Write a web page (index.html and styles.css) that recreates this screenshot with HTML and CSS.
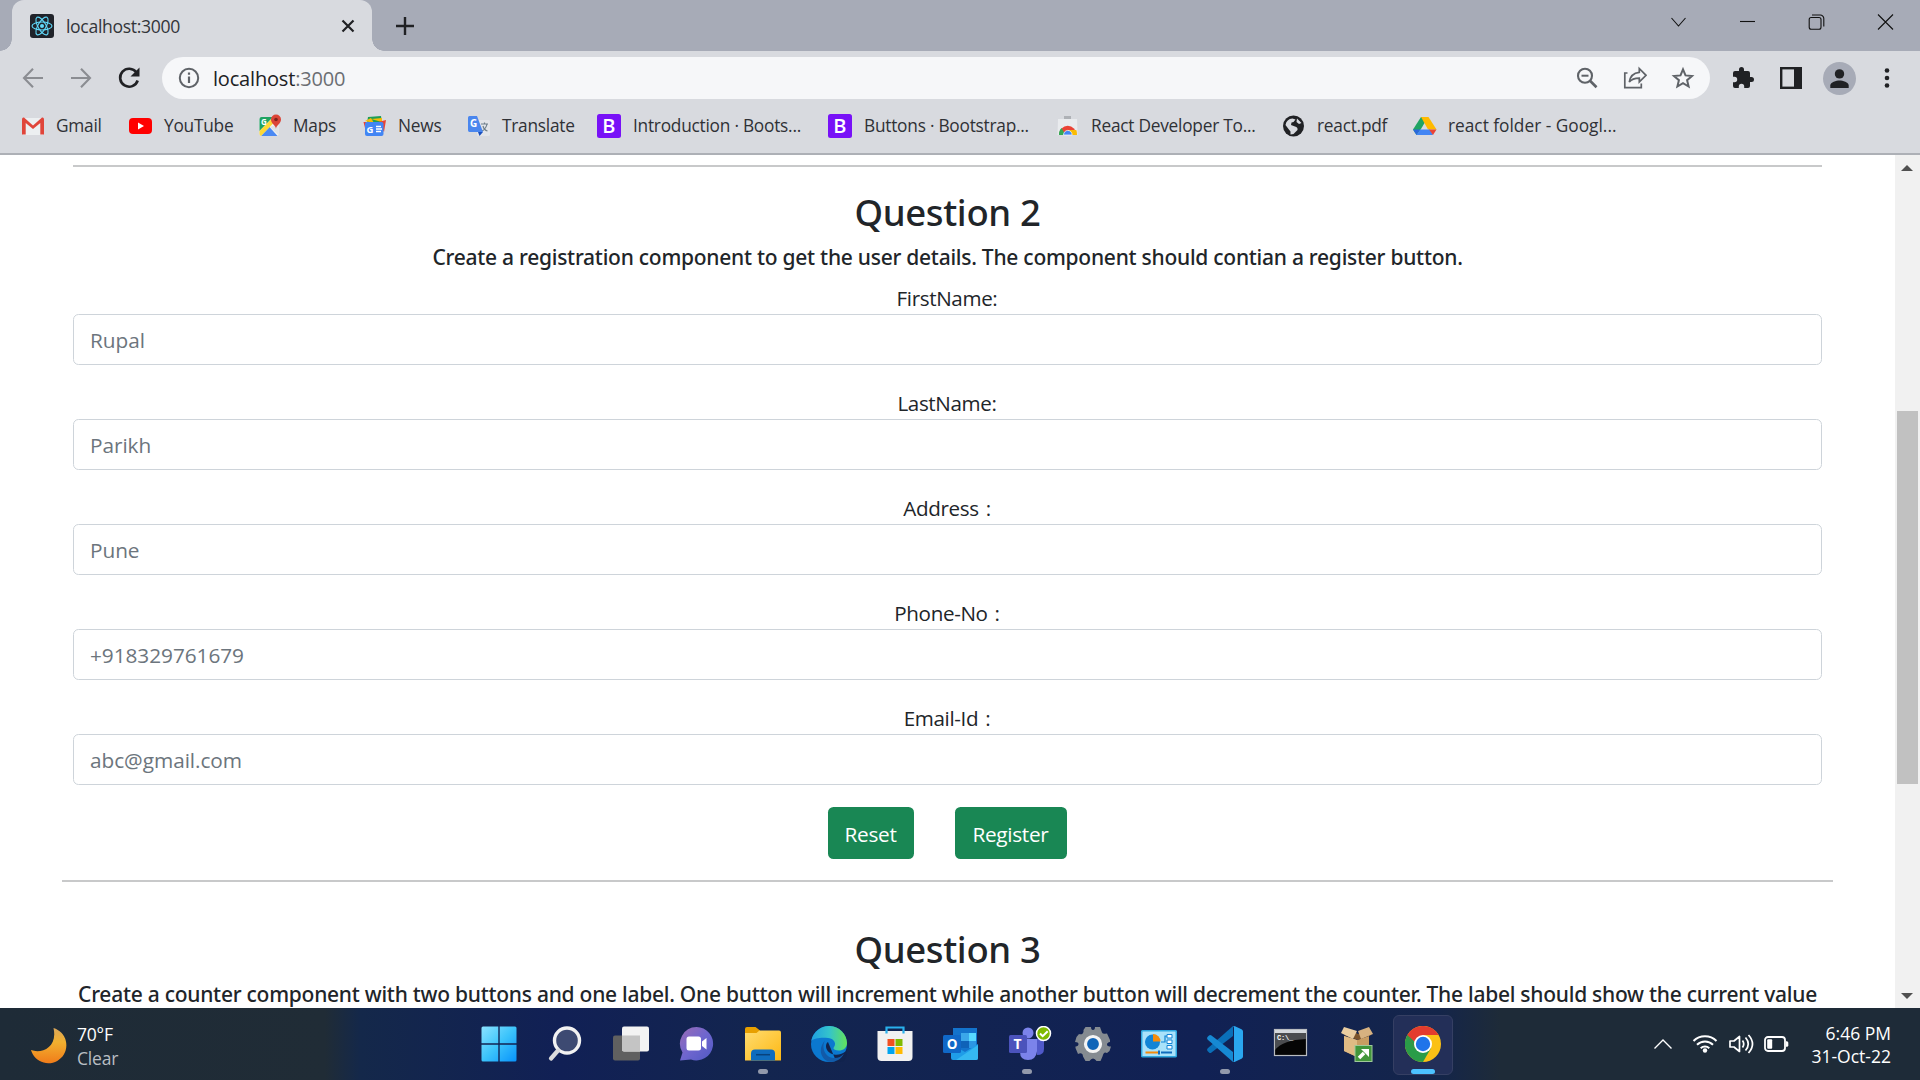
FILE: index.html
```html
<!DOCTYPE html>
<html lang="en">
<head>
<meta charset="utf-8">
<title>localhost:3000</title>
<link rel="stylesheet" href="styles.css">
</head>
<body>
<div class="screen">
  <header class="browser">
    <div class="tabstrip">
      <div class="tab">
        <svg class="favicon" width="24" height="24" viewBox="0 0 24 24"><rect width="24" height="24" rx="3" fill="#20232a"/><g fill="none" stroke="#61dafb" stroke-width="1.1"><ellipse cx="12" cy="12" rx="10" ry="4"/><ellipse cx="12" cy="12" rx="10" ry="4" transform="rotate(60 12 12)"/><ellipse cx="12" cy="12" rx="10" ry="4" transform="rotate(120 12 12)"/></g><circle cx="12" cy="12" r="2" fill="#61dafb"/></svg>
        <span class="tab-title">localhost:3000</span>
        <svg class="tab-close" width="14" height="14" viewBox="0 0 14 14"><path d="M1.5 1.5l11 11m0-11l-11 11" stroke="#202124" stroke-width="2.2"/></svg>
      </div>
      <svg class="new-tab" width="18" height="18" viewBox="0 0 18 18"><path d="M9 0v18M0 9h18" stroke="#202124" stroke-width="2.4"/></svg>
      <div class="window-controls">
        <svg width="16" height="16" viewBox="0 0 16 16"><path d="M1 4l7 8 7-8"/></svg>
        <svg width="16" height="16" viewBox="0 0 16 16"><path d="M.5 7.5h15"/></svg>
        <svg width="16" height="16" viewBox="0 0 16 16"><rect x=".7" y="3.5" width="11.8" height="11.8" rx="2"/><path d="M3.5 1h8.300a3.500 3.500 0 0 1 3.500 3.500v8"/></svg>
        <svg width="16" height="16" viewBox="0 0 16 16"><path d="M.5.5l15 15m0-15l-15 15"/></svg>
      </div>
    </div>
    <div class="toolbar">
      <svg width="24" height="24" viewBox="0 0 24 24" fill="none" stroke="#8b8d92" stroke-width="2.1"><path d="M22 12H3.500M12 2.800L3 12l9 9.200"/></svg>
      <svg width="24" height="24" viewBox="0 0 24 24" fill="none" stroke="#8b8d92" stroke-width="2.1"><path d="M2 12h18.500M12 2.800L21 12l-9 9.200"/></svg>
      <svg width="24" height="24" viewBox="0 0 24 24"><path d="M19.500 6.500A9 9 0 1 0 20.700 14.500" fill="none" stroke="#202124" stroke-width="2.600"/><path d="M22.500 1.500v9h-9z" fill="#202124"/></svg>
      <div class="omnibox">
        <svg width="24" height="24" viewBox="0 0 24 24"><circle cx="12" cy="12" r="9.200" fill="none" stroke="#5f6368" stroke-width="2"/><path d="M12 10.500V17M12 6.500v2.200" stroke="#5f6368" stroke-width="2.200"/></svg>
        <span class="url">localhost<i>:3000</i></span>
        <svg width="24" height="24" viewBox="0 0 24 24" fill="none" stroke="#5f6368"><circle cx="10" cy="9.700" r="7" stroke-width="2.100"/><path d="M6.500 9.700h7" stroke-width="2"/><path d="M15 14.800l6.500 6.400" stroke-width="2.600"/></svg>
        <svg width="24" height="24" viewBox="0 0 24 24" fill="none" stroke="#5f6368" stroke-width="1.700"><path d="M4.500 7H1.800v14.700h16.500V17.500"/><path d="M16.300 2.500l6.700 6.800-6.700 6.600v-3.800c-5 0-7.800 1-10 4 .7-5 3.700-9.200 10-9.800z"/></svg>
        <svg width="24" height="24" viewBox="0 0 24 24" fill="none" stroke="#5f6368" stroke-width="2"><path d="M12 3.400l2.500 6 6.500.55-4.900 4.250 1.500 6.300L12 17.100l-5.600 3.400 1.500-6.300L3 9.950l6.500-.55z"/></svg>
      </div>
      <svg class="ext" width="24" height="24" viewBox="0 0 24 24"><path d="M20.500 11H19V7a2 2 0 0 0-2-2h-4V3.500a2.500 2.500 0 0 0-5 0V5H4a2 2 0 0 0-1.990 2v3.800H3.500a2.700 2.700 0 0 1 0 5.400H2V20a2 2 0 0 0 2 2h3.800v-1.500a2.700 2.700 0 0 1 5.400 0V22H17a2 2 0 0 0 2-2v-4h1.500a2.500 2.500 0 0 0 0-5z" fill="#202124"/></svg>
      <svg class="panel" width="24" height="24" viewBox="0 0 24 24"><rect x="2.200" y="2.200" width="19.600" height="19.600" fill="none" stroke="#202124" stroke-width="2.400"/><path d="M15 2h7v20h-7z" fill="#202124"/></svg>
      <svg class="avatar" width="33" height="33" viewBox="0 0 33 33"><circle cx="16.500" cy="16.500" r="16.500" fill="#a7abb7"/><circle cx="16.500" cy="11.900" r="4.700" fill="#202124"/><path d="M7.300 26v-2.500c0-3.300 6-5 9.200-5s9.200 1.700 9.200 5V26z" fill="#202124"/></svg>
      <svg class="menu" width="24" height="24" viewBox="0 0 24 24" fill="#202124"><circle cx="12" cy="4.500" r="2.300"/><circle cx="12" cy="12" r="2.300"/><circle cx="12" cy="19.500" r="2.300"/></svg>
    </div>
    <nav class="bookmarks">
      <a class="bookmark"><svg viewBox="0 0 24 24"><path d="M2 4h20v17H2z" fill="#eceff1"/><path d="M1 20.500V5.500Q1 3 3 3.500l9 8 9-8q2-.5 2 2v15h-3.700V9L12 15 4.700 9v11.500z" fill="#e0453a"/></svg>Gmail</a>
      <a class="bookmark"><svg viewBox="0 0 24 24"><rect y="4" width="23" height="16" rx="4" fill="#f00"/><path d="M9 8.500l6 3.500-6 3.500z" fill="#fff"/></svg>YouTube</a>
      <a class="bookmark"><svg viewBox="0 0 24 24"><rect x="1.500" y="3" width="19" height="19" rx="2" fill="#f1f3f4"/><path d="M1.500 17V5a2 2 0 0 1 2-2H15z" fill="#1ea362"/><path d="M3 22l8.500-9 8 9z" fill="#4a89f3"/><path d="M1.500 17L15 3.500l2 4L3 22q-1.500-.5-1.500-2z" fill="#fdd835"/><path d="M12 13l8.500 8V10z" fill="#dfe2e5"/><text x="3" y="10.500" class="glyph" font-size="8" fill="#fff">G</text><path d="M18 15c0-4-5-5-5-9.500a5 5 0 0 1 10 0C23 10 18 11 18 15z" fill="#db4437"/><circle cx="18" cy="5.500" r="1.800" fill="#7d231c"/></svg>Maps</a>
      <a class="bookmark"><svg viewBox="0 0 24 24"><path d="M5 3l13-1 1 7H4z" fill="#1e9e55"/><path d="M2 7l6-3 3 5z" fill="#fbbc04"/><path d="M8 5l11-1v4z" fill="#fbbc04"/><path d="M15 8l8-2-2 12z" fill="#ea4335"/><path d="M.5 8l3 0v12z" fill="#ea4335"/><rect x="2" y="8" width="18.500" height="14" rx="2" fill="#4285f4"/><text x="3.500" y="18.500" class="glyph" font-size="9.500" fill="#fff">G</text><path d="M13 12.500h5m-5 2.500h6m-6 2.500h5" stroke="#fff" stroke-width="1.300"/></svg>News</a>
      <a class="bookmark"><svg viewBox="0 0 24 24"><rect x="10" y="6" width="13" height="16" rx="1.500" fill="#e3e5e9"/><path d="M14 10h7m-3.500-1.500V10m2.500 0q-1 5-5 7m1-5q1 4 4.500 5" fill="none" stroke="#70808c" stroke-width="1.200"/><path d="M2.500 2H10l6 16H2.500A1.700 1.700 0 0 1 1 16.300V3.700A1.700 1.700 0 0 1 2.500 2z" fill="#4a86ee"/><path d="M11 18h5l-3.500 4z" fill="#1a4fbd"/><text x="3" y="13" class="glyph" font-size="10" fill="#fff">G</text></svg>Translate</a>
      <a class="bookmark"><svg viewBox="0 0 24 24"><rect width="24" height="24" rx="2.500" fill="#7811f7"/><text x="5.300" y="19.300" font-size="20" font-weight="600" fill="#fff">B</text></svg>Introduction · Boots...</a>
      <a class="bookmark"><svg viewBox="0 0 24 24"><rect width="24" height="24" rx="2.500" fill="#7811f7"/><text x="5.300" y="19.300" font-size="20" font-weight="600" fill="#fff">B</text></svg>Buttons · Bootstrap...</a>
      <a class="bookmark"><svg viewBox="0 0 24 24"><path d="M8 2h7v3H8z" fill="#aeb1b6"/><path d="M2 5h19l.5 16H1.500z" fill="#e9ebee"/><path d="M3 21a8.600 9 0 0 1 17.500 0z" fill="#ea4335"/><path d="M3 21a9 9 0 0 1 2.500-7l4 7z" fill="#34a853"/><path d="M12 16h8.300q.8 2 .7 5h-9z" fill="#fbbc04"/><path d="M7.500 21a4.300 4.600 0 0 1 8.600 0z" fill="#4285f4" stroke="#fff" stroke-width=".7"/></svg>React Developer To...</a>
      <a class="bookmark"><svg viewBox="0 0 24 24"><circle cx="11.500" cy="12" r="10.500" fill="#202124"/><path d="M3.500 11q1-6 7-6.500l3 1-2 2.500-2 .5-.5 2.500 4 1.500q3 .5 2.500 3.500l-4 4-3 .5v-3l-2-2.500zM15 4.500l4.500 4.500-2.500 1-2.500-2z" fill="#d8dadf"/></svg>react.pdf</a>
      <a class="bookmark"><svg viewBox="0 0 24 24"><path d="M8 3h7L8 15l-4.500 6L0 15.500z" fill="#1fa463"/><path d="M8 3h7.500l8 12.500H15z" fill="#ffba00"/><path d="M7 15.500h10l3 5.500H3.500z" fill="#4285f4"/><path d="M3.500 21L0 15.500h7z" fill="#2a67dc"/><path d="M16 15.500h7.500L20 21z" fill="#ea4335"/></svg><span class="long">react folder - Googl...</span></a>
    </nav>
  </header>

  <div class="viewport">
    <main class="page">
      <hr class="rule">
      <section>
        <h2>Question 2</h2>
        <h5>Create a registration component to get the user details. The component should contian a register button.</h5>
        <form class="form">
          <div class="field"><label for="fn">FirstName:</label><input id="fn" placeholder="Rupal"></div>
          <div class="field"><label for="ln">LastName:</label><input id="ln" placeholder="Parikh"></div>
          <div class="field"><label for="ad">Address :</label><input id="ad" placeholder="Pune"></div>
          <div class="field"><label for="ph">Phone-No :</label><input id="ph" placeholder="+918329761679"></div>
          <div class="field"><label for="em">Email-Id :</label><input id="em" placeholder="abc@gmail.com"></div>
        </form>
        <div class="actions">
          <button class="btn reset" type="button">Reset</button>
          <button class="btn register" type="button">Register</button>
        </div>
      </section>
      <hr class="rule wide">
      <section class="next">
        <h2>Question 3</h2>
        <h5>Create a counter component with two buttons and one label. One button will increment while another button will decrement the counter. The label should show the current value</h5>
      </section>
    </main>
    <div class="scrollbar">
      <svg width="12" height="6" viewBox="0 0 12 6"><path d="M0 6l6-6 6 6z" fill="#505050"/></svg>
      <div class="thumb"></div>
      <svg width="12" height="6" viewBox="0 0 12 6"><path d="M0 0l6 6 6-6z" fill="#505050"/></svg>
    </div>
  </div>

  <footer class="taskbar">
    <div class="weather">
      <svg width="36" height="36" viewBox="0 0 36 36"><defs><linearGradient id="moon" x1="0" y1="0" x2="0" y2="1"><stop offset="0" stop-color="#d9a65a"/><stop offset=".4" stop-color="#f2b02f"/><stop offset="1" stop-color="#f07c1a"/></linearGradient></defs><path d="M22.500 0A18 18 0 1 1 0 22c10 4 27-2 22.500-22z" fill="url(#moon)"/></svg>
      <div class="weather-text"><div>70°F</div><div class="dim">Clear</div></div>
    </div>
    <div class="apps">
      <div class="app"><svg viewBox="0 0 36 36"><defs><linearGradient id="win" x1="0" y1="0" x2="1" y2="1"><stop offset="0" stop-color="#8be3ff"/><stop offset=".5" stop-color="#3cc4fb"/><stop offset="1" stop-color="#0893fb"/></linearGradient></defs><path d="M2 .5h15.300v16.800H.5V2A1.500 1.500 0 0 1 2 .5zM18.700.5H34A1.500 1.500 0 0 1 35.500 2v15.300H18.700zM.5 18.700h16.800v16.800H2A1.500 1.500 0 0 1 .5 34zM18.700 18.700h16.800V34a1.500 1.500 0 0 1-1.500 1.500H18.700z" fill="url(#win)"/></svg></div>
      <div class="app"><svg viewBox="0 0 36 36"><circle cx="20" cy="14.500" r="12.500" fill="#3d4a72" stroke="#f2f2f2" stroke-width="3.400"/><path d="M11 24.500L4 32.500" stroke="#dcdcdc" stroke-width="4.200" stroke-linecap="round"/></svg></div>
      <div class="app"><svg viewBox="0 0 36 36"><rect x="0" y="9.500" width="27" height="25" rx="2" fill="#606060"/><rect x="9" y=".5" width="27" height="25" rx="2" fill="#f3f3f3"/><path d="M9 9.500h18v16H11a2 2 0 0 1-2-2z" fill="#c4c4c4"/></svg></div>
      <div class="app"><svg viewBox="0 0 36 36"><defs><linearGradient id="chat" x1="0" y1="0" x2="1" y2="1"><stop offset="0" stop-color="#9a6bb5"/><stop offset=".5" stop-color="#6f66ce"/><stop offset="1" stop-color="#4f59c5"/></linearGradient></defs><path d="M17.500 1a16.700 16.700 0 1 1-5.500 32.500L1 34.500 3.500 26.500A16.700 16.700 0 0 1 17.500 1z" fill="url(#chat)"/><rect x="7.500" y="10.500" width="14.500" height="14" rx="2.500" fill="#fff"/><path d="M23 15.500l4.500-3.500v11.500l-4.500-3.500z" fill="#fff"/></svg></div>
      <div class="app running"><svg viewBox="0 0 36 36"><defs><linearGradient id="fold" x1="0" y1="0" x2="1" y2="1"><stop offset="0" stop-color="#ffdc70"/><stop offset="1" stop-color="#fdb813"/></linearGradient></defs><path d="M0 3a2 2 0 0 1 2-2h8.500l4.500 3.500V12H0z" fill="#e8a000"/><path d="M0 7h11.500l3-2.500H34a2 2 0 0 1 2 2v28H0z" fill="url(#fold)"/><path d="M6 34.500v-7a4 4 0 0 1 4-4h16a4 4 0 0 1 4 4v7z" fill="#0f6cbd"/><path d="M11 28.700h14" stroke="#08427c" stroke-width="1.500"/></svg></div>
      <div class="app"><svg viewBox="0 0 36 36"><defs><linearGradient id="edge" x1="0" x2="1"><stop offset="0" stop-color="#1f9fe0"/><stop offset=".5" stop-color="#34c3cc"/><stop offset="1" stop-color="#63e35a"/></linearGradient></defs><circle cx="18" cy="18" r="18" fill="#0b78d0"/><path d="M.3 15A18 18 0 0 1 36 17c0 5-4 7.500-8 7.500-5 0-6.500-1.500-5-3.500 2.500-3 .5-8.500-6-9C10 11.500 3 12 .3 15z" fill="url(#edge)"/><path d="M17 16c-4 3-2 11 6 12.500 4 .8 8-.5 10-2 .8-.5 2.500-1 3-2.500l1 2-4 9-7 2-1-2z" fill="#11234d"/><path d="M14 14.500c-4 7 0 16.500 8 17.500 5 .3 8-1 11-4.500-4 8-11 9-16 8-9-4-9-15-3-21z" fill="#125aa8"/></svg></div>
      <div class="app"><svg viewBox="0 0 36 36"><path d="M.5 5h35v26a4 4 0 0 1-4 4h-27a4 4 0 0 1-4-4z" fill="#f1f1f1"/><path d="M9.500 7.500v-6h17v6" fill="none" stroke="#29b0ec" stroke-width="2.200"/><path d="M10.500 13h7v7h-7z" fill="#f25022"/><path d="M18.500 13h7v7h-7z" fill="#7fba00"/><path d="M10.500 21h7v7h-7z" fill="#00a4ef"/><path d="M18.500 21h7v7h-7z" fill="#ffb900"/></svg></div>
      <div class="app"><svg viewBox="0 0 36 36"><path d="M10 2h24v24H10z" fill="#1373cc"/><path d="M18 7h8v8h-8z" fill="#3ba7ea"/><path d="M26 7h7v8h-7z" fill="#57d9ff"/><path d="M18 15h8v7h-8z" fill="#0f62b8"/><path d="M26 15h7v7h-7z" fill="#2b96e4"/><path d="M8 18l14 8 13-8v14a2 2 0 0 1-2 2H10a2 2 0 0 1-2-2z" fill="#1f9de8"/><path d="M13 34l22-15v13a2 2 0 0 1-2 2z" fill="#35b8f1"/><rect x="0" y="9" width="18" height="18" rx="1.500" fill="#1068c8"/><text x="3.700" y="22.500" class="glyph" font-size="13.500" fill="#fff">O</text></svg></div>
      <div class="app running"><svg class="teams" viewBox="0 0 44 36"><circle cx="19" cy="7" r="5.500" fill="#7b83eb"/><path d="M25 13h10v10q0 6-7 6z" fill="#5059c9"/><path d="M13 13h15v12q-1 9-9 9t-8-8z" fill="#7b83eb"/><rect x="0" y="9" width="18" height="18" rx="1.500" fill="#4b53bc"/><text x="4.600" y="22.700" class="glyph" font-size="14" fill="#fff">T</text><circle cx="34.500" cy="7.500" r="7" fill="#7fba00" stroke="#fff" stroke-width="1.500"/><path d="M31 7.500l2.700 2.700 5-5" fill="none" stroke="#fff" stroke-width="2"/></svg></div>
      <div class="app"><svg viewBox="0 0 36 36"><path d="M14.500 1h1.500q0 3 2 3t2-3h5l2 5.500q.5 1.500 3 1.300l2-.3L35 14v2q-3 .5-3 2.500t4 2l-1.500 4.500-2.500 2q-2-1-3 0t-1.500 3.500L25.500 35h-4q-1.500-2.500-3.500-2.500T14.500 35h-4L8 30.500q0-2.500-1.500-3t-3.500.5L.5 22v-1.500q3-.5 3-2.500T0 16l1.500-5L4 8q2 .7 3.500-.3t1-3.700L10.500 1z" fill="#858b91"/><circle cx="18" cy="18" r="7.500" fill="#0f64b8" stroke="#f4f4f4" stroke-width="3.200"/></svg></div>
      <div class="app"><svg viewBox="0 0 36 36"><rect x=".7" y="4.700" width="34.600" height="26" rx="1" fill="#a9e2fa" stroke="#2da8e0" stroke-width="1.500"/><circle cx="11.500" cy="16" r="7.500" fill="#1285d6"/><path d="M12 15.500V8a7.500 7.500 0 0 1 7.500 7.500z" fill="#f58b0a"/><path d="M20 16h4V10h2" fill="none" stroke="#1285d6" stroke-width="1.200"/><path d="M26 8.500h5v3.500h-5zm0 5.500h5v3.500h-5zm0 5.500h5V23h-5z" fill="#fff" stroke="#1285d6" stroke-width="1"/><path d="M4.500 26.500h13" stroke="#f58b0a" stroke-width="2"/><path d="M18 24.500v4M20 26.500h11" stroke="#0f6cbd" stroke-width="2"/></svg></div>
      <div class="app running"><svg viewBox="0 0 36 36"><path d="M26 0v10L4.500 26.500Q3 27.500 2 26.500L.5 25Q-.5 23.500.8 22.300z" fill="#0a6fb8"/><path d="M26 36V26L4.500 9.500Q3 8.500 2 9.500L.5 11Q-.5 12.500.8 13.700z" fill="#1689d3"/><path d="M25 0q1.500-.4 3 .3l6.500 3q1.500.7 1.500 2.200v25q0 1.500-1.500 2.200l-6.500 3q-1.500.7-3 .3 2 .3 2-2V2q0-2.300-2-2z" fill="#2aa7f0"/></svg></div>
      <div class="app"><svg viewBox="0 0 36 36"><rect x="1.500" y="3.500" width="32" height="26" fill="#050505" stroke="#b9bcc0" stroke-width="1.200"/><path d="M2 4h31v3H2z" fill="#d4d8dc"/><path d="M2 7h31v6Q10 14 2 24z" fill="#4b4d50"/><text x="4" y="14" class="mono" font-size="7" fill="#fff">C:\_</text></svg></div>
      <div class="app"><svg viewBox="0 0 36 36"><path d="M5 10l13 4 12-4v16l-12 5-13-6z" fill="#c99d62"/><path d="M18 14v17L5 25V10z" fill="#e0bb84"/><path d="M5 9L14 5l5 3 7-3 6 4-13 5z" fill="#7b542b"/><path d="M5 1L2 7l12 6 4-8z" fill="#e9cda0"/><path d="M19 5l3 8 12-5-4-7z" fill="#d7b280"/><rect x="16" y="19.500" width="17" height="16" fill="#42963b" stroke="#9fc99a"/><path d="M20 32l5-5" stroke="#fff" stroke-width="3.500"/><path d="M22 23h8v8z" fill="#fff"/></svg></div>
      <div class="app running active"><svg viewBox="0 0 36 36"><circle cx="18" cy="18" r="18" fill="#fbc116"/><path d="M18 18L2.400 9A18 18 0 0 1 33.600 9z" fill="#e33b2e"/><path d="M2.400 9A18 18 0 0 0 18 36l7.800-13.500L18 18z" fill="#2a9c48"/><path d="M18 9h15.600L25 20z" fill="#fbc116"/><path d="M2.400 9L10 22l8-13z" fill="#e33b2e"/><path d="M2.400 9l7.800 13.500L12 18z" fill="#2a9c48"/><circle cx="18" cy="18" r="9" fill="#fff"/><circle cx="18" cy="18" r="7.200" fill="#1f74ea"/></svg></div>
    </div>
    <div class="tray">
      <svg width="20" height="12" viewBox="0 0 20 12" fill="none" stroke="#fff" stroke-width="1.400"><path d="M1.500 10.500L10 2l8.500 8.500"/></svg>
      <svg class="wifi" width="26" height="24" viewBox="0 0 26 24" fill="none" stroke="#fff" stroke-width="2"><path d="M1.500 9a16.300 16.300 0 0 1 23 0M5 12.700a11.500 11.500 0 0 1 16 0M8.700 16.200a6.200 6.200 0 0 1 8.600 0"/><circle cx="13" cy="18.500" r="2.200" fill="#fff" stroke="none"/></svg>
      <svg class="volume" width="26" height="24" viewBox="0 0 26 24" fill="none" stroke="#fff" stroke-width="1.700"><path d="M2 9h4l5.500-4.500v15L6 15H2z" stroke-linejoin="round"/><path d="M14.500 8.500q2.500 3.500 0 7M17.500 5.500q5.500 6.500 0 13M20.500 3q8 9 0 18"/></svg>
      <svg class="battery" width="25" height="16" viewBox="0 0 25 16"><rect x="1" y="1" width="20" height="14" rx="3" fill="none" stroke="#fff" stroke-width="1.800"/><rect x="3.200" y="3.200" width="5" height="9.600" rx="1" fill="#fff"/><path d="M22 5.200h.8q1.500 0 1.500 1.500v2.600q0 1.500-1.500 1.500H22z" fill="#fff"/></svg>
      <div class="clock"><div>6:46 PM</div><div>31-Oct-22</div></div>
    </div>
  </footer>
</div>
</body>
</html>
```
FILE: styles.css
```css
* { box-sizing: border-box; }
body { margin: 0; font-family: "Open Sans", "Noto Sans", sans-serif; color: #212529; }
svg { display: block; flex: none; }
.glyph { font-family: "Open Sans", sans-serif; font-weight: 700; }
.mono { font-family: "Liberation Mono", monospace; font-weight: 700; }

.screen { width: 1920px; height: 1080px; display: flex; flex-direction: column; overflow: hidden; }

/* Browser frame */
.browser { flex: none; height: 155px; background: #d8dadf; border-bottom: 2px solid #adb0b6; }
.tabstrip { height: 51px; background: #a7abb7; display: flex; align-items: center; padding-left: 12px; }
.tab { position: relative; width: 360px; height: 51px; display: flex; align-items: center; padding: 0 18px; background: #d8dadf; border-radius: 12px 12px 0 0; }
.tab::before, .tab::after { content: ""; position: absolute; bottom: 0; width: 12px; height: 12px; }
.tab::before { right: 100%; background: radial-gradient(circle at 0 0, transparent 11.5px, #d8dadf 12px); }
.tab::after { left: 100%; background: radial-gradient(circle at 100% 0, transparent 11.5px, #d8dadf 12px); }
.tab-title { flex: 1; margin-left: 12px; font-size: 17.6px; letter-spacing: -0.33px; color: #33353a; }
.tab-close { margin-right: -1px; }
.new-tab { margin-left: 24px; }
.window-controls { display: flex; margin-left: auto; align-self: flex-start; height: 43px; align-items: center; }
.window-controls svg { width: 69px; fill: none; stroke: #111; stroke-width: 1.1; }

.toolbar { height: 54px; display: flex; align-items: center; gap: 24px; padding: 0 21px; }
.omnibox { flex: 1; height: 42px; margin: 0 -3px; display: flex; align-items: center; gap: 24px; padding: 0 15px; border-radius: 21px; background: #f6f7f9; }
.url { flex: 1; margin-left: -12px; font-size: 20px; letter-spacing: -0.18px; color: #202124; }
.url i { font-style: normal; color: #6b6e73; }
.avatar { margin: 0 -5px 0 -4px; }

.bookmarks { height: 42px; padding-left: 21px; display: grid; grid-template-columns: 108px 129px 105px 104px 130px 231px 228px 226px 131px auto; align-items: center; }
.bookmark { display: flex; align-items: center; gap: 11px; height: 42px; padding-bottom: 1px; white-space: nowrap; font-size: 17.3px; letter-spacing: -0.24px; color: #2f3136; }
.bookmark svg { width: 24px; height: 24px; overflow: visible; letter-spacing: 0; }
.bookmark:nth-child(6), .bookmark:nth-child(7) { gap: 12px; }
.long { letter-spacing: 0; }

/* Page */
.viewport { flex: 1; min-height: 0; display: flex; }
.page { flex: 1; overflow: hidden; padding-top: 10px; text-align: center; }
.rule { height: 2px; margin: 0 73px; border: 0; background: #c8c9ca; }
.rule.wide { margin: 21px 62px 0; }
section { padding: 22px 73px 0; }
section.next { padding: 44px 60px 0; }
h2, h5 { margin: 0; font-family: "Noto Sans", sans-serif; font-weight: 500; white-space: nowrap; }
h2 { font-size: 36.5px; line-height: 46px; letter-spacing: -0.35px; }
h5 { margin-top: 9px; font-size: 21px; line-height: 26px; letter-spacing: -0.255px; }
.form { margin-top: 12px; display: flex; flex-direction: column; gap: 22px; }
.field { display: flex; flex-direction: column; }
.field label { font-size: 20.6px; line-height: 32px; letter-spacing: -0.35px; word-spacing: 2px; padding-right: 1px; }
.field input { height: 51px; padding: 0 16px; border: 1px solid #ced4da; border-radius: 5.5px; font: 20.8px "Open Sans", sans-serif; letter-spacing: -0.05px; background: #fff; }
.field input::placeholder { color: #6c757d; opacity: 1; }
.actions { margin-top: 22px; display: flex; justify-content: center; gap: 41px; padding-right: 1px; }
.btn { height: 52px; padding: 1px 0 0; border: 0; border-radius: 5.5px; background: #198754; color: #fff; font: 20.8px "Open Sans", sans-serif; letter-spacing: -0.3px; }
.reset { width: 86px; }
.register { width: 112px; }

.scrollbar { width: 25px; padding: 10px 2px 9px; display: flex; flex-direction: column; align-items: center; background: #f1f1f1; }
.scrollbar svg { margin-right: 1px; }
.thumb { width: 21px; height: 373px; margin: 240px 0 auto; background: #c1c1c1; }

/* Taskbar */
.taskbar { flex: none; height: 72px; display: flex; align-items: center; color: #fff; font-size: 17.5px; letter-spacing: -0.2px; background: linear-gradient(90deg, #1e2b37 0, #202c36 325px, #14284a 360px, #112055 560px, #13254f 760px, #112154 1200px, #14254a 1440px, #1e2b38 1500px, #1e2b38 100%); }
.weather { width: 466px; display: flex; align-items: center; gap: 10px; padding: 3px 0 0 31px; line-height: 24px; }
.dim { color: #b9bec3; }
.apps { display: flex; }
.app { position: relative; width: 66px; height: 72px; display: flex; align-items: center; justify-content: center; }
.app svg { width: 36px; height: 36px; position: relative; }
.app .teams { width: 44px; margin-left: 8px; }
.running::after { content: ""; position: absolute; left: 28px; bottom: 6px; width: 10px; height: 5px; border-radius: 3px; background: #9299ab; }
.active::before { content: ""; position: absolute; inset: 7px 3px 5px; border-radius: 6px; border: 1px solid #353f63; background: #232f58; }
.active::after { left: 21px; width: 24px; background: #4cc2ff; }
.tray { flex: 1; display: flex; align-items: center; justify-content: flex-end; padding-right: 29px; }
.wifi { margin-left: 19px; }
.volume { margin-left: 10px; }
.battery { margin-left: 10px; }
.clock { margin-left: 22px; padding-top: 1px; text-align: right; line-height: 23px; letter-spacing: 0; }
```
